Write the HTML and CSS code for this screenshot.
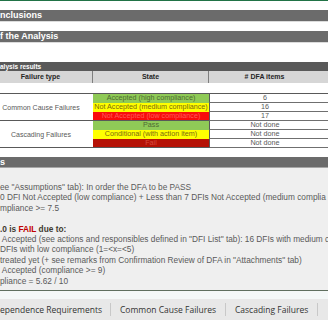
FILE: index.html
```html
<!DOCTYPE html>
<html lang="en">
<head>
    <meta charset="UTF-8">
    <meta name="viewport" content="width=device-width, initial-scale=1.0">
    <title>DFA Conclusions</title>
    <link rel="stylesheet" href="styles.css">
</head>
<body>

    <div class="sheet">
        <div class="top-line"></div>

        <div class="bar bar-first">nclusions</div>
        <div class="bar bar-second">f the Analysis</div>

        <!-- Results table -->
        <div class="sub-bar">alysis results</div>
        <div class="results">
            <div class="head">Failure type</div>
            <div class="head">State</div>
            <div class="head head-last"># DFA items</div>
            <div class="blank"></div>
            <div class="rule"></div>

            <div class="type">Common Cause Failures</div>
            <div class="state ok">Accepted (high compliance)</div>
            <div class="count">6</div>
            <div class="state mid">Not Accepted (medium compliance)</div>
            <div class="count">16</div>
            <div class="state low">Not Accepted (low compliance)</div>
            <div class="count">17</div>

            <div class="type">Cascading Failures</div>
            <div class="state ok">Pass</div>
            <div class="count">Not done</div>
            <div class="state mid">Conditional (with action item)</div>
            <div class="count">Not done</div>
            <div class="state fail">Fail</div>
            <div class="count">Not done</div>
        </div>

        <!-- Comments -->
        <div class="bar bar-third">s</div>
        <div class="notes">
            <p>ee "Assumptions" tab): In order the DFA to be PASS</p>
            <p>0 DFI Not Accepted (low compliance) + Less than 7 DFIs Not Accepted (medium complia</p>
            <p>mpliance &gt;= 7.5</p>
            <p>&nbsp;</p>
            <p class="verdict">.0 is <span class="fail-word">FAIL</span> due to:</p>
            <p> Accepted (see actions and responsibles defined in "DFI List" tab): 16 DFIs with medium c</p>
            <p>DFIs with low compliance (1=&lt;x=&lt;5)</p>
            <p>treated yet (+ see remarks from Confirmation Review of DFA in "Attachments" tab)</p>
            <p> Accepted (compliance &gt;= 9)</p>
            <p>pliance = 5.62 / 10</p>
        </div>

        <div class="tab-gap"></div>
        <div class="tabs">
            <div class="tab tab-first">ependence Requirements</div>
            <div class="tab">Common Cause Failures</div>
            <div class="tab">Cascading Failures</div>
            <div class="tab tab-last"></div>
        </div>
    </div>

</body>
</html>
```

FILE: styles.css
```css
body {
    margin: 0;
    background-color: #ffffff;
    font-family: "Liberation Sans", Arial, sans-serif;
    overflow: hidden;
}

.sheet {
    width: 328px;
    height: 320px;
    overflow: hidden;
}

.top-line {
    height: 1px;
    background-color: #217346;
}

/* Section header bars */
.bar {
    height: 11px;
    line-height: 11px;
    background-color: #6b6b6b;
    color: #ffffff;
    font-weight: bold;
    font-size: 9px;
    white-space: nowrap;
    border-bottom: 1px solid #dcdcdc;
}
.bar-first {
    margin-top: 9px;
}
.bar-second {
    margin-top: 9px;
}
.bar-third {
    margin-top: 9px;
    height: 10px;
    line-height: 10px;
    border-bottom: 1px solid #a6a6a6;
}

.sub-bar {
    margin-top: 19px;
    height: 9px;
    line-height: 9px;
    background-color: #595959;
    color: #ffffff;
    font-weight: bold;
    font-size: 6.5px;
}

/* Results table */
.results {
    display: grid;
    grid-template-columns: 93px 116px 119px;
    font-size: 7.2px;
    color: #595959;
}
.head {
    height: 12px;
    line-height: 12px;
    background-color: #d6d6d6;
    color: #262626;
    font-weight: bold;
    font-size: 7px;
    text-align: center;
    border-right: 1px solid #7f7f7f;
}
.head:first-child {
    padding-right: 11px;
}
.head-last {
    border-right: none;
    padding-right: 8px;
}
.blank {
    grid-column: 1 / 4;
    height: 10px;
}
.rule {
    grid-column: 1 / 4;
    height: 1px;
    background-color: #595959;
}
.type {
    grid-row: span 3;
    display: flex;
    align-items: center;
    justify-content: center;
    padding-right: 11px;
    font-size: 7px;
    border-bottom: 1px solid #595959;
}
.state,
.count {
    height: 8px;
    line-height: 8px;
    text-align: center;
    white-space: nowrap;
    overflow: hidden;
}
.state {
    border-bottom: 1px solid transparent;
}
.count {
    padding-right: 8px;
    border-bottom: 1px solid #6f6f6f;
    border-left: 1px solid #595959;
}
.state.ok {
    background-color: #8fca57;
    border-bottom-color: #8fca57;
    color: #4e6b33;
}
.state.mid {
    background-color: #ffff00;
    border-bottom-color: #ffff00;
    color: #7a6a10;
}
.state.low {
    background-color: #f80c0c;
    border-bottom-color: #595959;
    color: #ff5a5a;
}
.state.fail {
    background-color: #b51206;
    border-bottom-color: #595959;
    color: #d84c40;
}

/* Comments */
.notes {
    background-color: #efefef;
    padding: 14px 0 4px 0;
    color: #5a5a5a;
    font-size: 8.3px;
    line-height: 10.4px;
    border-bottom: 1px solid #5f6f5f;
}
.notes p {
    margin: 0;
    white-space: pre;
    overflow: hidden;
}
.notes .verdict {
    font-weight: bold;
    color: #3f3a30;
}
.fail-word {
    color: #c00000;
}

/* Sheet tabs */
.tab-gap {
    height: 8px;
    background-color: #f4f8f8;
}
.tabs {
    display: flex;
    height: 21px;
    background-color: #e8e8e8;
    font-family: "Open Sans", sans-serif;
    font-size: 8.5px;
    color: #333333;
}
.tab {
    display: flex;
    align-items: center;
    padding: 0 9px;
    white-space: nowrap;
    border-right: 1px solid #c8c8c8;
    margin: 4px 0;
}
.tab-first {
    padding-left: 0;
    width: 101px;
}
.tab-last {
    border-right: none;
}
```
